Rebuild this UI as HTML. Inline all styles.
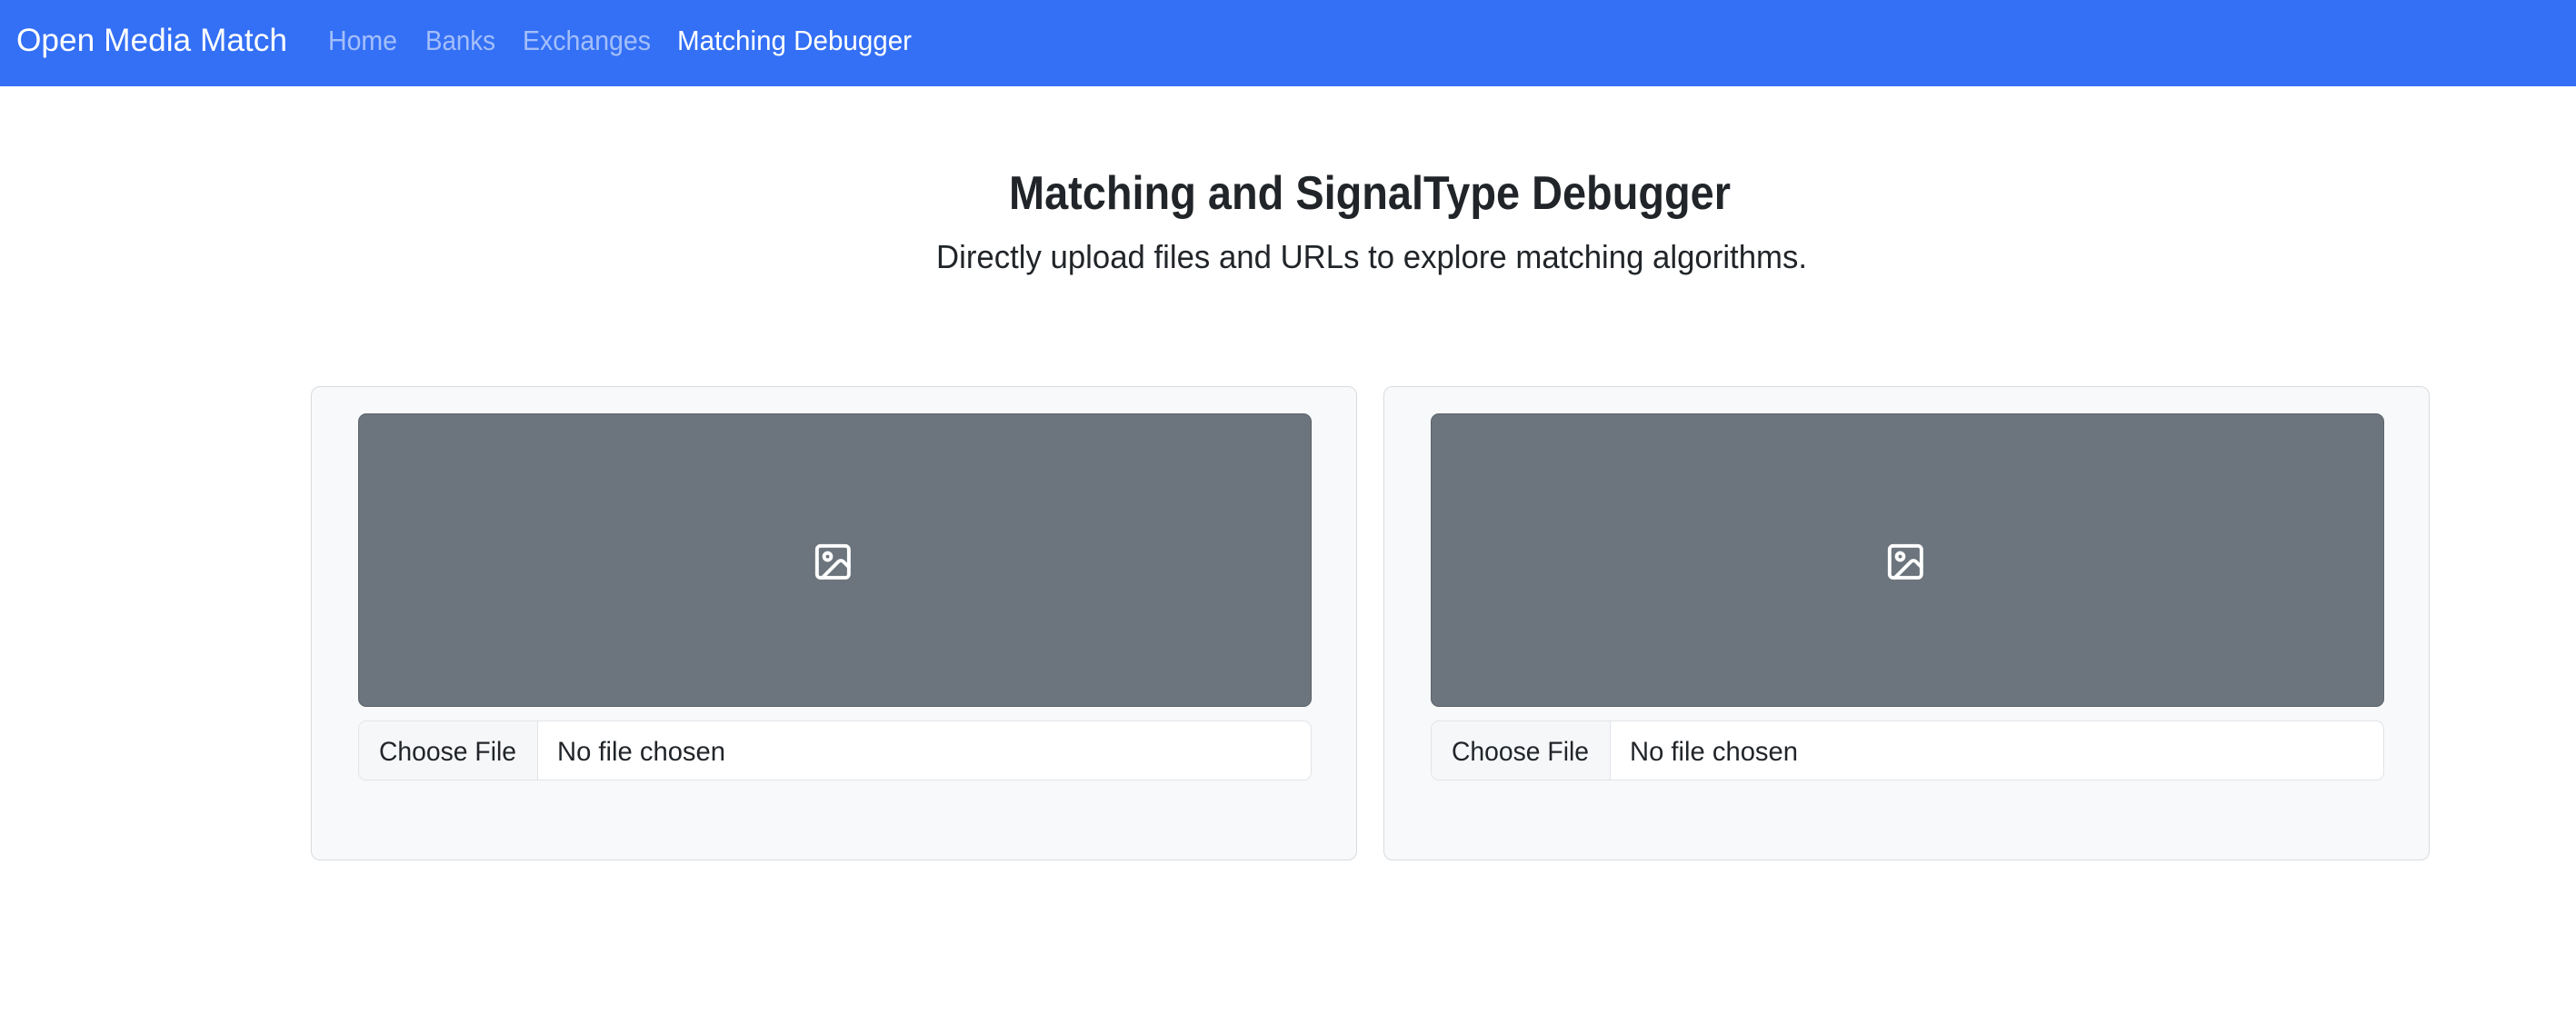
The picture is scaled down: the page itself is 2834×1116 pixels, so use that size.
<!DOCTYPE html>
<html><head><meta charset="utf-8"><style>
html,body{margin:0;padding:0;background:#fff;}
body{width:2834px;height:1116px;position:relative;overflow:hidden;font-family:"Liberation Sans",sans-serif;}
.nav{position:absolute;left:0;top:0;width:2834px;height:95px;background:#3470f5;}
.card{position:absolute;top:425px;width:1149px;height:520px;background:#f8f9fa;border:1px solid #d9dcdf;border-radius:10px;}
.ph{position:absolute;left:51px;top:29px;width:1047px;height:321px;background:#6c757d;border:1px solid #5c636a;border-radius:9px;}
.file{position:absolute;left:51px;top:367px;width:1047px;height:64px;background:#fff;border:1px solid #e1e4e8;border-radius:9px;overflow:hidden;}
.btn{position:absolute;left:0;top:0;width:196px;height:64px;background:#f6f7f9;border-right:1px solid #e1e4e8;}
svg{position:absolute;overflow:visible;}
</style></head><body>
<div class="nav"></div>
<svg style="left:0;top:0" width="2834" height="1116">
  <g font-family="Liberation Sans, sans-serif">
    <text x="18" y="56" font-size="35" fill="#fff" textLength="298" lengthAdjust="spacingAndGlyphs">Open Media Match</text>
    <text x="361" y="55" font-size="31" fill="rgba(255,255,255,0.55)" textLength="76" lengthAdjust="spacingAndGlyphs">Home</text>
    <text x="468" y="55" font-size="31" fill="rgba(255,255,255,0.55)" textLength="77" lengthAdjust="spacingAndGlyphs">Banks</text>
    <text x="575" y="55" font-size="31" fill="rgba(255,255,255,0.55)" textLength="141" lengthAdjust="spacingAndGlyphs">Exchanges</text>
    <text x="745" y="55" font-size="31" fill="#fff" textLength="258" lengthAdjust="spacingAndGlyphs">Matching Debugger</text>
    <text x="1110" y="230" font-size="52" font-weight="bold" fill="#212529" textLength="794" lengthAdjust="spacingAndGlyphs">Matching and SignalType Debugger</text>
    <text x="1030" y="295" font-size="36" fill="#212529" textLength="958" lengthAdjust="spacingAndGlyphs">Directly upload files and URLs to explore matching algorithms.</text>
  </g>
</svg>

<div class="card" style="left:342px;">
  <div class="ph"></div>
  <div class="file"><div class="btn"></div></div>
</div>
<div class="card" style="left:1522px;">
  <div class="ph"></div>
  <div class="file"><div class="btn"></div></div>
</div>

<svg style="left:0;top:0" width="2834" height="1116">
  <g font-family="Liberation Sans, sans-serif" font-size="30" fill="#212529">
    <text x="417" y="837" textLength="151" lengthAdjust="spacingAndGlyphs">Choose File</text>
    <text x="613" y="837" textLength="185" lengthAdjust="spacingAndGlyphs">No file chosen</text>
    <text x="1597" y="837" textLength="151" lengthAdjust="spacingAndGlyphs">Choose File</text>
    <text x="1793" y="837" textLength="185" lengthAdjust="spacingAndGlyphs">No file chosen</text>
  </g>
</svg>

<svg style="left:893px;top:595px" width="46.7" height="46.7" viewBox="0 0 24 24" fill="none" stroke="#fff" stroke-width="2" stroke-linecap="round" stroke-linejoin="round">
  <rect x="3" y="3" width="18" height="18" rx="2"/><circle cx="9" cy="9" r="2"/><path d="m21 15-3.086-3.086a2 2 0 0 0-2.828 0L6 21"/>
</svg>
<svg style="left:2073px;top:595px" width="46.7" height="46.7" viewBox="0 0 24 24" fill="none" stroke="#fff" stroke-width="2" stroke-linecap="round" stroke-linejoin="round">
  <rect x="3" y="3" width="18" height="18" rx="2"/><circle cx="9" cy="9" r="2"/><path d="m21 15-3.086-3.086a2 2 0 0 0-2.828 0L6 21"/>
</svg>
</body></html>
